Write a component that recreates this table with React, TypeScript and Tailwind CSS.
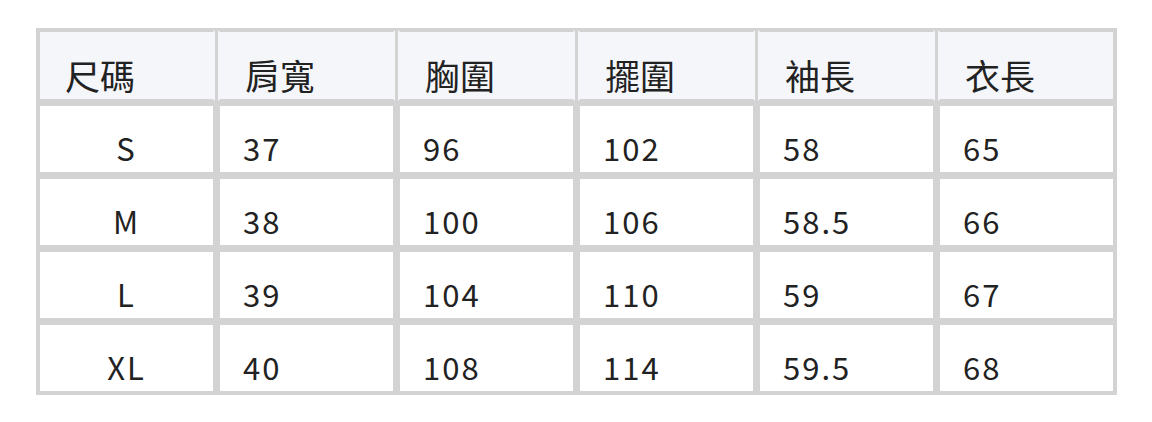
import React from 'react'

/* Size chart — 尺碼表 (shoulder / chest / hem / sleeve / length, cm) */

const headers = ['尺碼', '肩寬', '胸圍', '擺圍', '袖長', '衣長']

const rows: string[][] = [
  ['S', '37', '96', '102', '58', '65'],
  ['M', '38', '100', '106', '58.5', '66'],
  ['L', '39', '104', '110', '59', '67'],
  ['XL', '40', '108', '114', '59.5', '68'],
]

export default function App() {
  return (
    <div
      className="w-[1152px] h-[422px] bg-white pt-[28px] pl-[36px]"
      style={{ fontFamily: '"Noto Sans CJK TC", "Noto Sans", sans-serif' }}
    >
      <div className="w-[1081px] bg-[#d3d3d3] p-[2px] grid grid-cols-6 gap-[3px] text-[#222222]">
        {headers.map((h, i) => (
          <div
            key={h}
            className={
              'h-[71px] bg-[#f5f6fa] border-y-2 border-y-[#d3d3d3] border-x-2 flex items-end pl-[25px] pb-[3px] text-[35px] leading-none ' +
              (i === 0 ? 'border-l-[#d3d3d3] ' : 'border-l-[#f5f6fa] ') +
              (i === 5 ? 'border-r-[#d3d3d3]' : 'border-r-[#f5f6fa]')
            }
          >
            <span className="pb-[4px]">{h}</span>
          </div>
        ))}
        {rows.map((r) =>
          r.map((v, j) => (
            <div
              key={r[0] + j}
              className={
                'h-[70px] bg-white border-2 border-[#d3d3d3] flex items-end pb-[9px] text-[31px] tracking-[2px] leading-none ' +
                (j === 0 ? 'justify-center' : 'pl-[23px]')
              }
            >
              {v}
            </div>
          ))
        )}
      </div>
    </div>
  )
}
